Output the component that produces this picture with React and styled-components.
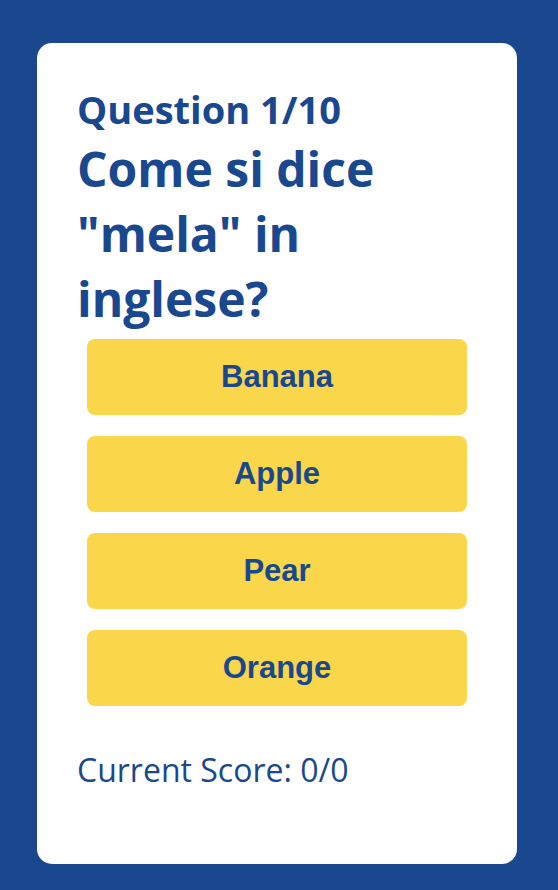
import React, { useState } from "react";
import styled, { createGlobalStyle } from "styled-components";

const blue = "#19488e";
const yellow = "#fad64a";

const GlobalStyle = createGlobalStyle`
  html, body {
    margin: 0;
    padding: 0;
    background: ${blue};
  }
  body {
    font-family: "Open Sans", "Liberation Sans", sans-serif;
  }
`;

const Page = styled.div`
  width: 558px;
  height: 890px;
  padding: 43px 0 0 37px;
  box-sizing: border-box;
`;

const Card = styled.div`
  width: 480px;
  height: 821px;
  box-sizing: border-box;
  background: #ffffff;
  border-radius: 15px;
  padding: 40px 40px 0 40px;
  color: ${blue};
`;

const Counter = styled.h3`
  margin: 0;
  font-size: 38px;
  font-weight: 700;
`;

const QuestionText = styled.h1`
  margin: 1px 0 8px 0;
  font-size: 48px;
  font-weight: 700;
`;

const Answers = styled.div`
  display: flex;
  flex-direction: column;
  gap: 21px;
  padding: 0 10px;
`;

const AnswerButton = styled.button`
  height: 76px;
  border: none;
  border-radius: 8px;
  background: ${yellow};
  color: ${blue};
  font-family: "Liberation Sans", Arial, sans-serif;
  font-size: 31px;
  font-weight: 700;
  cursor: pointer;
`;

const Score = styled.p`
  margin: 42px 0 0 0;
  font-size: 32px;
  font-weight: 400;
`;

const answers = ["Banana", "Apple", "Pear", "Orange"];

const App = () => {
    const [score, setScore] = useState(0);
    const [answered, setAnswered] = useState(0);

    const onAnswer = (answer) => {
        setAnswered(answered + 1);
        if (answer === "Apple") setScore(score + 1);
    }

    return (
        <>
            <GlobalStyle />
            <Page>
                <Card>
                    <Counter>Question 1/10</Counter>
                    <QuestionText>Come si dice "mela" in inglese?</QuestionText>
                    <Answers>
                        {answers.map((a) => (
                            <AnswerButton key={a} onClick={() => onAnswer(a)}>{a}</AnswerButton>
                        ))}
                    </Answers>
                    <Score>Current Score: {score}/{answered}</Score>
                </Card>
            </Page>
        </>
    )
}

export default App;
